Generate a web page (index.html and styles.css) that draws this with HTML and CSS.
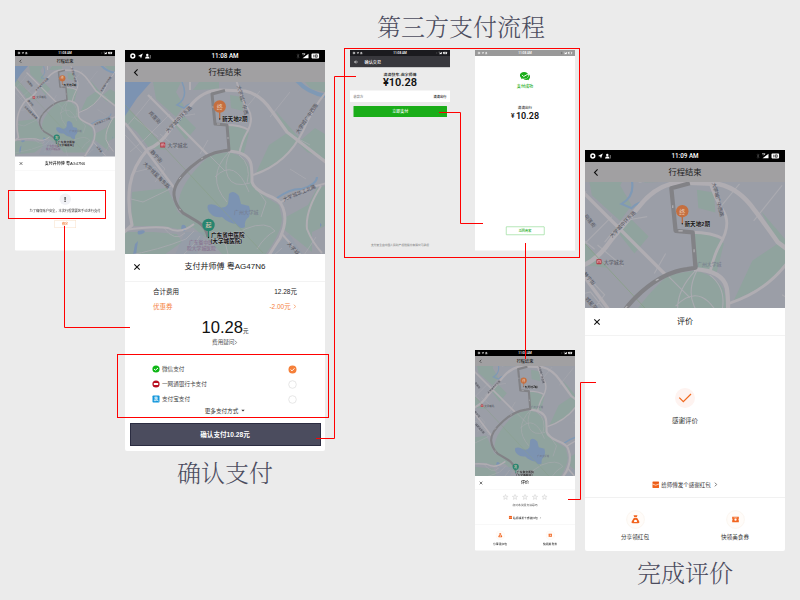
FILE: index.html
```html
<!DOCTYPE html>
<html lang="zh-CN">
<head>
<meta charset="utf-8">
<title>支付流程</title>
<link rel="stylesheet" href="styles.css">
</head>
<body>
<svg class="defs" width="0" height="0">
  <defs>
    <symbol id="back" viewBox="0 0 6 8"><path d="M4.6 .9 1.5 4l3.1 3.1" fill="none" stroke="#111" stroke-width="1.1"/></symbol>
    <symbol id="close" viewBox="0 0 8 8"><path d="M1.3 1.3l5.4 5.4M6.700 1.300 1.300 6.700" fill="none" stroke="#111" stroke-width="1.100"/></symbol>
    <symbol id="next" viewBox="0 0 4 6"><path d="M1 .8 3.100 3 1 5.200" fill="none" stroke="currentColor" stroke-width=".8"/></symbol>
    <symbol id="st-left" viewBox="0 0 22 6">
      <circle cx="2.800" cy="3" r="1.900" fill="none" stroke="#fff" stroke-width="1.500"/>
      <path d="M8 3 12.800.6 11 5.600 10.200 3.500z" fill="#fff"/>
      <circle cx="17.300" cy="1.900" r="1.200" fill="#fff"/><path d="M15 5.500q.3-2.200 2.300-2.200t2.300 2.200z" fill="#fff"/><path d="M20.300 2v3.500" stroke="#aaa" stroke-width=".7"/>
    </symbol>
    <symbol id="st-right" viewBox="0 0 24 6">
      <path d="M1 1.500l2 2.800-1 1V.8l1 1-2 2.800" fill="none" stroke="#555" stroke-width=".5"/>
      <path d="M6.500 5.300 12.500.7v4.600z" fill="#fff"/><path d="M6 .8h3M7.500 2.300 9 .8" stroke="#fff" stroke-width=".7"/>
      <rect x="15.500" y=".6" width="7.600" height="4.800" rx=".8" fill="#fff"/><path d="M17.800 1.700v2.700M19.300 1.900h1.900v2.300h-1.900z" fill="none" stroke="#111" stroke-width=".7"/>
    </symbol>
    <symbol id="wechat" viewBox="0 0 24 22">
      <path d="M10 1C4.500 1 .8 4.300.8 8.500c0 2.500 1.300 4.500 3.300 5.800L3.500 17l3.200-1.500c1 .3 2.100.5 3.300.5 5.500 0 9.500-3.300 9.500-7.500S15.500 1 10 1z" fill="#1aad19"/>
      <path d="M21 6.500c1.300 1.200 2.100 2.800 2.100 4.800 0 2.300-1.100 4.200-2.900 5.500l.5 2.600-2.900-1.300c-3.300.9-6.600.3-8.800-1.300C15.500 16.500 20.700 12.500 21 6.500z" fill="#1aad19"/>
      <path d="M5.500 7.500l3.500 3.700L20.500 4.500" fill="none" stroke="#fff" stroke-width="2"/>
    </symbol>
    <symbol id="star" viewBox="0 0 12 12"><path d="M6 .9l1.500 3.500 3.800.3-2.900 2.500.9 3.700L6 8.900l-3.300 2 .9-3.700L.7 4.700l3.800-.3z" fill="#f6f6f6" stroke="#cfcfcf" stroke-width="1"/></symbol>
    <symbol id="packet" viewBox="0 0 8 8"><rect x=".5" y=".5" width="7" height="7" rx=".6" fill="#f2641e"/><path d="M.5 3.200Q4 5.800 7.500 3.200" fill="none" stroke="#fff" stroke-width=".7"/><path d="M1 1.700h6" stroke="#d94a0c" stroke-width=".5"/></symbol>
    <symbol id="bag" viewBox="0 0 20 20"><circle cx="10" cy="10" r="9.400" fill="#fffcf9" stroke="#f8f0e8" stroke-width=".6"/><path d="M7.900 5.600h4.200l-.8 2.100H8.700zM8.200 8.300h3.600l2.100 3.600q.9 2.100-1.100 2.100H7.200q-2 0-1.100-2.100z" fill="#f2641e"/><path d="M8.500 11q1.500-1.500 3 0v1.600h-3z" fill="#fff"/></symbol>
    <symbol id="coupon" viewBox="0 0 20 20"><circle cx="10" cy="10" r="9.400" fill="#fffcf9" stroke="#f8f0e8" stroke-width=".6"/><path d="M6.500 7h7v2q-.9 1 0 2v2h-7v-2q.9-1 0-2z" fill="#f2641e"/><circle cx="10" cy="10.200" r="1.200" fill="#fff"/><path d="M8 8.200h4" stroke="#fff" stroke-width=".5"/></symbol>

    <symbol id="terrain" viewBox="0 0 200 182" overflow="visible">
      <rect width="200" height="182" fill="#9b9ea7"/>
      <g fill="#90a39e">
        <path d="M0 23 42 68 24 66 12 50 0 40zM28 0h28l-5 10 8 14-8 11-20-18zM47 40l12-6 12 12-10 12zM105 13l12 2 1 14-12-3zM68 8l6-8h20v7z"/>
        <path d="M103 43q17 2 21 8l-5 20-16-2zM85 73 104 70q19 5 21 18l3 17 13 10 13 8 3 14q-1 15-17 36H98L84 158q-24-17-30-31-4-22 31-54z"/>
        <path d="M150 28 176 58 190 46 200 52v25l-18-7-20-20zM144 63l18-12 10 8-16 20-25 12zM7 110l35-4 6 12 5 12 20 14-15 4-20-4H6zM0 150h28l24 2 5 8-18 13-39 4zM161 135l22-12 9-17 8-2v40l-13 6v20l-30-24zM180 0h20v10l-14-3z"/>
      </g>
      <g fill="#8b9bab" opacity=".35"><path d="M60 150l20 0-10 28H48zM144 170l20-18 15 22-5 8h-32z"/></g>
      <g fill="#7c93b2">
        <path d="M0 0h26L12 16 0 34z"/>
        <path d="M83 123q5-2 11 2 6 2 9-3l1-10q4-5 10 2l2 8 8 2q2 5 0 11-5 3-4 10-5 3-9-3-8-1-14-7-7 1-11-3-5-5-3-9z"/>
        <path d="M13 149q9-2 6 2-8 4-6-2zM10 162l3-3-2 14H8zM57 143q3-1 4 2 0 5-3 4-3-2-1-6zM195 141q3 2 0 4z"/>
      </g>
      <g fill="none" stroke="#7f99b5">
        <path d="M170-4q11 15 32 18" stroke-width="4"/>
        <path d="M57 0q7 16-5 23l7 3q3-3 6-4" stroke-width="1.500"/>
        <path d="M152 116q14-10 25-9 15-5 15-12" stroke-width="2"/>
      </g>
      <g fill="none" stroke="#aaaab0" stroke-width=".8">
        <path d="M27 14 15 29 1 45M45 32 20 57 5 70M35 52l18 15M10 36l23 19M22 68 40 87 30 100M40 50l12-15 18-3M75 72l8-14M0 53l17 18M105 70q-7 14-2 25t22 6M114 73q13 10 8 28M104 70q-24 25-2 50M90 95q20-20 34 15M120 147q22-9 30 2-10 5-18 18M120 147l-20 13 5 20M127 100l14 20-5 15M85 74l15 15M38 145q12 16 22 6M0 174q34-6 61-17l8-8M58 173q12-11 17-19M120 27l15-18M145 35l20-25M170 55l15 8M165 87l16 10M139 182l18-16M179 173l12-18M10 90l20-5 16 20M45 107 18 120 6 117"/>
      </g>
      <g fill="none" stroke="#b0adb2" stroke-linejoin="round">
        <path d="M-5 154 7 143Q2 122 5 103T23 67Q35 63 45 48L65 24Q78 8 95 8l25 1q15 3 26 19 9 12 16 22l40 31" stroke-width="3.200"/>
        <path d="M23 13 83 73M0 41 18 64l32 43" stroke-width="2.400"/>
        <path d="M103 69q20 1 23 13 1 5 1 18 2 7 15 13 14 5 16 13 5 13-3 30-9 14-17 27" stroke-width="3"/>
        <path d="M111-3q5 20 12 30t-2 25q-4 7-7 20M101 43q15 0 23 5M202 9q-13 15-24 40-16 33-50 44M155 121q20-14 47-20M156 151l25 28M196 104q-16 25-14 43 5 13 15 24M0 148q27-4 43-2 12 7 26-4M65 8V-2" stroke-width="2"/>
      </g>
      <path d="M0 23 138 171" stroke="#8aa088" stroke-width=".6"/>
      <path d="M100 8.500 87 12l3 30 12 1 2 25-6 1Q82 71 66 85 48 101 49 113q1 10 9 18l15 9q8 5 10 15" fill="none" stroke="#828286" stroke-width="3" stroke-linejoin="round"/>
      <path d="M88 24v2M92 42h3M103 55v2M78 76l-2 1M56 95l-2 2M54 127l2 1" stroke="#b5b4b8" stroke-width=".8"/>
    </symbol>

    <g id="pin-end"><path d="M0 0v-8" stroke="#bd693a" stroke-width="1.200"/><circle cy="-12.500" r="6.200" fill="#c56f3f"/><text y="-10.200" class="pin-text">终</text><circle r=".7" fill="#222"/></g>
    <g id="pin-start"><path d="M0 0v-8" stroke="#28806d" stroke-width="1.200"/><circle cy="-12.500" r="6.200" fill="#278570"/><text y="-10.200" class="pin-text">起</text><circle r=".7" fill="#222"/></g>
    <g id="metro"><rect x="-2.500" y="-2.500" width="5" height="5" rx=".6" fill="#b5333f"/><path d="M-1.400 1.500v-2.600h2.800v2.600M0-1v2.500" fill="none" stroke="#e6cfd4" stroke-width=".6"/><text x="4.700" y="1.900" class="road">大学城北</text></g>

    <symbol id="map-pay" viewBox="0 0 200 182" overflow="visible">
      <use href="#terrain" width="200" height="182"/>
      <use href="#metro" x="37.700" y="63"/>
      <g class="road">
        <text transform="translate(23.500 31) rotate(48)">岗莲街</text>
        <text transform="translate(43 51) rotate(-46)">大学城中环东路</text>
        <text transform="translate(112 4) rotate(75)">大学城广中西</text>
        <text transform="translate(173.500 52) rotate(-56)">大学城广中西路</text>
        <text transform="translate(25 70) rotate(48)">静宁街</text>
        <text transform="translate(18 82) rotate(45)">大学城星海东路</text>
        <text transform="translate(159 119.500) rotate(-23)">大学城华工北路</text>
        <text transform="translate(162 162) rotate(48)">大学城</text>
      </g>
      <text x="109" y="132" class="area">广州大学城</text>
      <text x="64" y="162" class="hospital">广东省中医</text><text x="62" y="167.500" class="hospital">院大学城医院</text>
      <use href="#pin-end" x="94.700" y="37"/><text x="97" y="39" class="place">新天地2期</text>
      <use href="#pin-start" x="83.500" y="155.500"/><text x="86" y="154.500" class="place">广东省中医院</text><text x="85.500" y="160.700" class="place">(大学城医院)</text>
    </symbol>

    <symbol id="map-rate" viewBox="0 0 200 220" overflow="visible">
      <g transform="translate(-37.200 -10.800) scale(1.420)"><use href="#terrain" width="200" height="182"/></g>
      <use href="#metro" x="14" y="79.700"/>
      <g class="road">
        <text transform="translate(-1 34) rotate(52)">岗莲街</text>
        <text transform="translate(27 56) rotate(-46)">大学城中环东路</text>
        <text transform="translate(127 1) rotate(76)">大学城广中西路</text>
        <text transform="translate(-2 92) rotate(50)">静宁街</text>
        <text transform="translate(0 117) rotate(48)">城星海东路</text>
      </g>
      <text x="112" y="84" class="area">广州大学城</text>
      <text x="124" y="181" class="area">广州大学城</text>
      <use href="#pin-end" x="97.300" y="41.700"/><text x="99.500" y="43.500" class="place">新天地2期</text>
      <use href="#pin-start" x="81.500" y="214"/><text x="84" y="213" class="place">广东省中医院</text><text x="83" y="219" class="place">(大学城医院)</text>
    </symbol>
  </defs>
</svg>

<main class="board">
  <h1 class="label label-third">第三方支付流程</h1>
  <h2 class="label label-confirm">确认支付</h2>
  <h2 class="label label-done">完成评价</h2>

  <section class="screen half at-notice">
    <div class="status"><svg class="sl"><use href="#st-left"/></svg><span>11:08 AM</span><svg class="sr"><use href="#st-right"/></svg></div>
    <header class="bar"><svg class="back"><use href="#back"/></svg><span>行程结束</span></header>
    <svg class="map map-181" viewBox="0 0 200 181"><use href="#map-pay" width="200" height="182"/></svg>
    <div class="title"><svg class="close"><use href="#close"/></svg><span>支付井师傅 粤AG47N6</span></div>
    <div class="notice">
      <div class="bang">!</div>
      <p>为了确保账户安全，本次行程需要您手动进行支付</p>
      <div class="retry">确定</div>
    </div>
  </section>

  <section class="screen at-pay">
    <div class="status"><svg class="sl"><use href="#st-left"/></svg><span>11:08 AM</span><svg class="sr"><use href="#st-right"/></svg></div>
    <header class="bar"><svg class="back"><use href="#back"/></svg><span>行程结束</span></header>
    <svg class="map map-171" viewBox="0 0 200 171.500"><use href="#map-pay" width="200" height="182"/></svg>
    <div class="title"><svg class="close"><use href="#close"/></svg><span>支付井师傅 粤AG47N6</span></div>
    <div class="fees">
      <div class="fee"><span>合计费用</span><span>12.28元</span></div>
      <div class="fee orange"><span>优惠券</span><span>-2.00元 <svg class="next"><use href="#next"/></svg></span></div>
    </div>
    <div class="total"><b>10.28</b><i>元</i></div>
    <div class="ask">费用疑问<svg class="next"><use href="#next"/></svg></div>
    <ul class="methods">
      <li><svg class="mi" viewBox="0 0 8 8"><circle cx="4" cy="4" r="3.600" fill="#0db615"/><path d="M2 4l1.500 1.200L6 3" fill="none" stroke="#fff"/></svg><span>微信支付</span><svg class="radio" viewBox="0 0 9 9"><circle cx="4.500" cy="4.500" r="4" fill="#f5803a"/><path d="M2.600 4.600l1.400 1.300 2.500-2.600" fill="none" stroke="#fff" stroke-width=".9"/></svg></li>
      <li><svg class="mi" viewBox="0 0 8 8"><circle cx="4" cy="4" r="3.600" fill="#b80f20"/><rect x="1.800" y="3" width="4.400" height="1.900" rx=".5" fill="#fff"/></svg><span>一网通银行卡支付</span><svg class="radio" viewBox="0 0 9 9"><circle cx="4.500" cy="4.500" r="3.800" fill="#fff" stroke="#dcdcdc" stroke-width=".7"/></svg></li>
      <li><svg class="mi" viewBox="0 0 8 8"><rect x=".5" y=".5" width="7" height="7" rx=".8" fill="#1196db"/><path d="M2.200 2.300h3.600M4 1.400v2.200M2.500 3.600h3Q5 5.500 3 5.900 1.500 5.700 2.500 4.800 4 4.400 6.600 6" fill="none" stroke="#fff" stroke-width=".7"/></svg><span>支付宝支付</span><svg class="radio" viewBox="0 0 9 9"><circle cx="4.500" cy="4.500" r="3.800" fill="#fff" stroke="#dcdcdc" stroke-width=".7"/></svg></li>
    </ul>
    <div class="more">更多支付方式<svg class="caret" viewBox="0 0 4 3"><path d="M.3.700h3.400L2 2.500z" fill="#333"/></svg></div>
    <div class="confirm">确认支付10.28元</div>
  </section>

  <section class="screen half wx at-deal">
    <div class="status"><svg class="sl"><use href="#st-left"/></svg><span>11:08 AM</span><svg class="sr"><use href="#st-right"/></svg></div>
    <header class="wxbar"><svg class="arrow" viewBox="0 0 8 8"><path d="M4 1 1 4l3 3M1 4h6.500" fill="none" stroke="#fff" stroke-width="1.200"/></svg><span>确认交易</span></header>
    <div class="order"><span>滴滴快车-曲字师傅</span><b>¥10.28</b></div>
    <div class="payee"><span>收款方</span><b>滴滴出行</b></div>
    <div class="paynow">立即支付</div>
    <footer class="insure">支付安全由中国人民财产保险股份有限公司承保</footer>
  </section>

  <section class="screen half paid at-paid">
    <div class="status"><svg class="sl"><use href="#st-left"/></svg><span>11:08 AM</span><svg class="sr"><use href="#st-right"/></svg></div>
    <svg class="wechat"><use href="#wechat"/></svg>
    <div class="ok">支付成功</div>
    <div class="shop">滴滴出行</div>
    <div class="sum"><small>¥</small>10.28</div>
    <div class="return">返回商家</div>
  </section>

  <section class="screen half at-stars">
    <div class="status"><svg class="sl"><use href="#st-left"/></svg><span>11:08 AM</span><svg class="sr"><use href="#st-right"/></svg></div>
    <header class="bar"><svg class="back"><use href="#back"/></svg><span>行程结束</span></header>
    <svg class="map map-220" viewBox="0 0 200 220"><use href="#map-rate" width="200" height="220"/></svg>
    <div class="title"><svg class="close"><use href="#close"/></svg><span>评价</span></div>
    <div class="rate">
      <div class="stars"><svg><use href="#star"/></svg><svg><use href="#star"/></svg><svg><use href="#star"/></svg><svg><use href="#star"/></svg><svg><use href="#star"/></svg></div>
      <p>您对本次服务满意吗</p>
    </div>
    <div class="gift"><svg class="packet"><use href="#packet"/></svg><span>给师傅发个感谢红包</span><svg class="next"><use href="#next"/></svg></div>
    <div class="extras"><div><svg><use href="#bag"/></svg><span>分享领红包</span></div><div><svg><use href="#coupon"/></svg><span>快领美食券</span></div></div>
  </section>

  <section class="screen at-done">
    <div class="status"><svg class="sl"><use href="#st-left"/></svg><span>11:09 AM</span><svg class="sr"><use href="#st-right"/></svg></div>
    <header class="bar"><svg class="back"><use href="#back"/></svg><span>行程结束</span></header>
    <svg class="map map-126" viewBox="0 0 200 126"><use href="#map-rate" width="200" height="220"/></svg>
    <div class="title"><svg class="close"><use href="#close"/></svg><span>评价</span></div>
    <div class="thanks">
      <svg viewBox="0 0 20 20"><circle cx="10" cy="10" r="10" fill="#fef3f0"/><path d="M4.300 9.600l4 4L16 6" fill="none" stroke="#f0691d" stroke-width="1.200"/></svg>
      <span>感谢评价</span>
    </div>
    <div class="gift"><svg class="packet"><use href="#packet"/></svg><span>给师傅发个感谢红包</span><svg class="next"><use href="#next"/></svg></div>
    <div class="extras"><div><svg><use href="#bag"/></svg><span>分享领红包</span></div><div><svg><use href="#coupon"/></svg><span>快领美食券</span></div></div>
  </section>

  <svg class="links" viewBox="0 0 800 600">
    <rect x="8.500" y="190.500" width="97" height="28"/>
    <path d="M64.500 226v101.500H130"/>
    <rect x="117.500" y="354.500" width="211" height="63"/>
    <path d="M316 438.500h18.500v-362H356"/>
    <rect x="344.500" y="48.500" width="235" height="209"/>
    <path d="M439 112.500h21.500v111H483M525.500 243v116M568 499.500h12.500v-117H596"/>
  </svg>
</main>
</body>
</html>
```
FILE: styles.css
```css
* { box-sizing: border-box; margin: 0; padding: 0; }
body { background: #ebebeb; font-family: "Liberation Sans", "Noto Sans CJK SC", sans-serif; color: #333; }
.defs { position: absolute; }
.board { position: relative; width: 800px; height: 600px; overflow: hidden; background: #ebebeb; }
svg { display: block; flex: none; }

.label { position: absolute; font: 300 24px/32px "Noto Serif CJK SC", "Noto Serif SC", "Noto Sans CJK SC", serif; color: #4b4c5e; white-space: nowrap; }
.label-third { left: 377px; top: 10px; }
.label-confirm { left: 177px; top: 456px; }
.label-done { left: 637px; top: 556px; }

.links { position: absolute; left: 0; top: 0; width: 800px; height: 600px; fill: none; stroke: #f00; stroke-width: 1; }

.screen { position: absolute; width: 200px; height: 400.5px; background: #fff; border-radius: 0 0 2px 2px; overflow: hidden; display: flex; flex-direction: column; white-space: nowrap; }
.half { transform: scale(.5); transform-origin: 0 0; height: 401px; font-weight: 500; }
.at-notice { left: 15px; top: 50px; }
.at-pay { left: 125px; top: 50px; }
.at-deal { left: 350px; top: 50px; }
.at-paid { left: 475px; top: 50px; }
.at-stars { left: 475px; top: 350px; }
.at-done { left: 585px; top: 150px; }

.status { flex: none; height: 12px; padding: 0 5px; background: #000; color: #fff; display: grid; grid-template-columns: 1fr auto 1fr; align-items: center; font-family: Roboto, sans-serif; font-size: 6.3px; font-weight: 500; line-height: 12px; }
.sl { width: 22px; height: 6px; }
.sr { width: 24px; height: 6px; justify-self: end; }
.bar { flex: none; height: 20px; background: #a1a0a2; display: grid; grid-template-columns: 1fr auto 1fr; align-items: center; font-size: 8.3px; line-height: 20px; color: #222; padding: 0 8px; }
.back { width: 6px; height: 9px; }
.map { width: 200px; overflow: hidden; }
.map-181 { height: 181px; }
.map-171 { height: 171.5px; }
.map-220 { height: 220px; }
.map-126 { height: 126px; }

.pin-text { font-size: 6px; fill: #e6c9b4; text-anchor: middle; }
.road { font-size: 5px; fill: #50515a; }
.area { font-size: 4.9px; fill: #74798a; }
.hospital { font-size: 4.8px; fill: #856a8b; }
.place { font-size: 5.6px; font-weight: 700; fill: #111; stroke: #b9bac0; stroke-width: .6px; paint-order: stroke; }

.title { flex: none; height: 28px; border-bottom: 1px solid #f3f3f3; display: grid; grid-template-columns: 1fr auto 1fr; align-items: center; padding: 0 8px; font-size: 8px; line-height: 12px; color: #222; }
.close { width: 8px; height: 8px; }
.next { width: 3.5px; height: 5px; display: inline-block; }

.notice { display: flex; flex-direction: column; align-items: center; padding-top: 46px; }
.bang { width: 23px; height: 23px; border-radius: 50%; background: #f1f2f6; font-size: 16px; font-weight: 700; line-height: 23px; text-align: center; }
.notice p { font-size: 6.45px; line-height: 10px; margin-top: 7px; color: #555; }
.retry { width: 43px; height: 16px; margin-top: 13px; border: 1px solid #f8dfc6; color: #f5803a; font-size: 6px; line-height: 14px; text-align: center; }

.fees { padding: 2px 28px 0; }
.fee { display: flex; justify-content: space-between; font-size: 6.5px; line-height: 15.5px; height: 15.5px; color: #222; }
.orange { color: #f5803a; padding-right: 1px; }
.total { display: flex; justify-content: center; align-items: baseline; margin-top: 3.5px; height: 20px; line-height: 20px; color: #111; }
.total b { font-size: 16.6px; font-weight: 400; }
.total i { font-size: 5.5px; font-style: normal; line-height: 8px; }
.ask { display: flex; justify-content: center; align-items: center; font-size: 5.6px; height: 8px; line-height: 8px; color: #555; }
.methods { list-style: none; padding: 0 28px 0 27px; margin-top: 15.5px; }
.methods li { display: flex; align-items: center; height: 15px; font-size: 5.6px; color: #444; }
.mi { width: 8px; height: 8px; margin-right: 2px; }
.radio { width: 9px; height: 9px; margin-left: auto; }
.more { display: flex; justify-content: center; align-items: center; gap: 3px; font-size: 5.6px; line-height: 8px; }
.caret { width: 4px; height: 3px; }
.confirm { margin: auto 4.5px 4.5px 4.5px; height: 23.5px; background: #4b4c5e; border: 1px solid #2b2c41; color: #fff; font-size: 6.6px; font-weight: 700; line-height: 21.5px; text-align: center; }

.wx { background: #ebebeb; border-radius: 0; }
.wx .status { background: #1b1b1f; }
.wxbar { height: 23px; flex: none; display: flex; align-items: center; gap: 13px; padding-left: 8px; background: #38383d; color: #fff; font-size: 8.3px; }
.arrow { width: 8px; height: 8px; }
.order { height: 46px; flex: none; display: flex; flex-direction: column; align-items: center; padding-top: 7px; border-top: 1.5px solid #fff; color: #111; font-size: 7.9px; line-height: 12px; }
.order b { font-family: Roboto, sans-serif; font-size: 22px; line-height: 18px; font-weight: 600; }
.payee { height: 23px; flex: none; background: #fff; display: flex; justify-content: space-between; align-items: center; padding: 0 7px; font-size: 6.5px; color: #888; }
.payee b { color: #111; font-weight: 500; }
.paynow { margin: 8px 6px 0 7px; height: 22px; flex: none; background: #1aad19; color: #fff; border-radius: 1px; font-size: 8px; line-height: 22px; text-align: center; }
.insure { margin: auto 0 6px; font-size: 5.55px; line-height: 10px; color: #888; text-align: center; }

.paid { align-items: center; border-radius: 0; }
.paid .status { background: #999; align-self: stretch; }
.wechat { width: 22px; height: 20px; margin-top: 31px; }
.ok { color: #1aad19; font-size: 8.2px; line-height: 12px; margin-top: 4px; }
.shop { font-size: 7.2px; line-height: 12px; margin-top: 31px; }
.sum { font-family: Roboto, sans-serif; font-size: 18px; font-weight: 600; line-height: 20px; color: #111; margin-top: 0; }
.sum small { font-size: 13px; margin-right: 3px; vertical-align: 2px; }
.return { width: 77px; height: 17px; margin: auto 0 31px; border: 1.5px solid #6fcf70; border-radius: 1px; color: #1aad19; font-size: 6.3px; font-weight: 500; line-height: 14px; text-align: center; }

.rate { display: flex; flex-direction: column; align-items: center; padding-top: 8px; }
.stars { display: flex; gap: 7.7px; }
.stars svg { width: 12px; height: 12px; }
.rate p { font-size: 5.6px; line-height: 8px; margin-top: 5px; color: #777; }
.gift { display: flex; justify-content: center; align-items: center; gap: 1.5px; height: 12px; margin-top: auto; margin-bottom: 6.5px; font-size: 5.5px; color: #333; }
.gift .next { margin-left: 2px; }
.packet { width: 7.5px; height: 7.5px; }
.extras { flex: none; height: 53.5px; border-top: 1px solid #f1f1f1; display: grid; grid-template-columns: 1fr 1fr; padding-top: 12px; }
.extras div { display: flex; flex-direction: column; align-items: center; font-size: 5.6px; line-height: 8px; gap: 4px; color: #333; }
.extras svg { width: 19px; height: 19px; }
.thanks { display: flex; flex-direction: column; align-items: center; padding-top: 52px; font-size: 6.5px; line-height: 10px; gap: 8px; color: #333; }
.thanks svg { width: 20px; height: 20px; }
```
